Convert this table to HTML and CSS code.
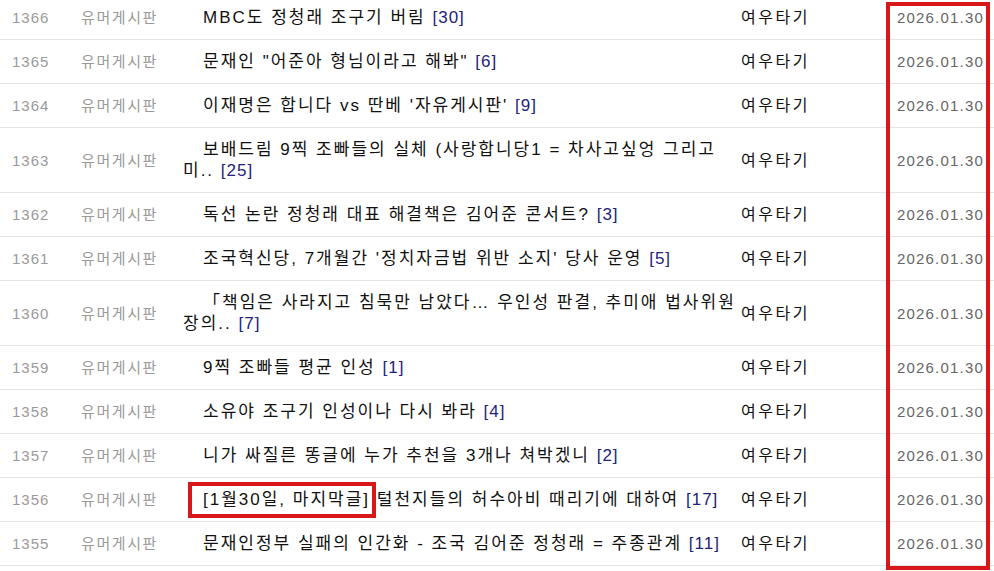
FILE: index.html
```html
<!DOCTYPE html>
<html lang="ko">
<head>
<meta charset="utf-8">
<title>유머게시판</title>
<link rel="stylesheet" href="styles.css">
</head>
<body>
<div class="board">
  <div class="list">
    <div class="row"><div class="num">1366</div><div class="cat">유머게시판</div><div class="title"><span class="t">MBC도 정청래 조구기 버림</span> <span class="cmt">[30]</span></div><div class="author">여우타기</div><div class="date">2026.01.30</div></div>
    <div class="row"><div class="num">1365</div><div class="cat">유머게시판</div><div class="title"><span class="t">문재인 "어준아 형님이라고 해봐"</span> <span class="cmt">[6]</span></div><div class="author">여우타기</div><div class="date">2026.01.30</div></div>
    <div class="row"><div class="num">1364</div><div class="cat">유머게시판</div><div class="title"><span class="t">이재명은 합니다 vs 딴베 '자유게시판'</span> <span class="cmt">[9]</span></div><div class="author">여우타기</div><div class="date">2026.01.30</div></div>
    <div class="row"><div class="num">1363</div><div class="cat">유머게시판</div><div class="title"><span class="t">보배드림 9찍 조빠들의 실체 (사랑합니당1 = 차사고싶엉 그리고</span> <span class="t">미..</span> <span class="cmt">[25]</span></div><div class="author">여우타기</div><div class="date">2026.01.30</div></div>
    <div class="row"><div class="num">1362</div><div class="cat">유머게시판</div><div class="title"><span class="t">독선 논란 정청래 대표 해결책은 김어준 콘서트?</span> <span class="cmt">[3]</span></div><div class="author">여우타기</div><div class="date">2026.01.30</div></div>
    <div class="row"><div class="num">1361</div><div class="cat">유머게시판</div><div class="title"><span class="t">조국혁신당, 7개월간 '정치자금법 위반 소지' 당사 운영</span> <span class="cmt">[5]</span></div><div class="author">여우타기</div><div class="date">2026.01.30</div></div>
    <div class="row"><div class="num">1360</div><div class="cat">유머게시판</div><div class="title"><span class="t">「책임은 사라지고 침묵만 남았다… 우인성 판결, 추미애 법사위원</span><span class="t">장의..</span> <span class="cmt">[7]</span></div><div class="author">여우타기</div><div class="date">2026.01.30</div></div>
    <div class="row"><div class="num">1359</div><div class="cat">유머게시판</div><div class="title"><span class="t">9찍 조빠들 평균 인성</span> <span class="cmt">[1]</span></div><div class="author">여우타기</div><div class="date">2026.01.30</div></div>
    <div class="row"><div class="num">1358</div><div class="cat">유머게시판</div><div class="title"><span class="t">소유야 조구기 인성이나 다시 봐라</span> <span class="cmt">[4]</span></div><div class="author">여우타기</div><div class="date">2026.01.30</div></div>
    <div class="row"><div class="num">1357</div><div class="cat">유머게시판</div><div class="title"><span class="t">니가 싸질른 똥글에 누가 추천을 3개나 쳐박겠니</span> <span class="cmt">[2]</span></div><div class="author">여우타기</div><div class="date">2026.01.30</div></div>
    <div class="row"><div class="num">1356</div><div class="cat">유머게시판</div><div class="title"><span class="t"><span class="mark">[1월30일, 마지막글]</span> 털천지들의 허수아비 때리기에 대하여</span> <span class="cmt">[17]</span></div><div class="author">여우타기</div><div class="date">2026.01.30</div></div>
    <div class="row"><div class="num">1355</div><div class="cat">유머게시판</div><div class="title"><span class="t">문재인정부 실패의 인간화 - 조국 김어준 정청래 = 주종관계</span> <span class="cmt">[11]</span></div><div class="author">여우타기</div><div class="date">2026.01.30</div></div>
  </div>
  <div class="date-mark"></div>
</div>
</body>
</html>
```

FILE: styles.css
```css
html, body {
  margin: 0;
  padding: 0;
  background: #fff;
}
body {
  font-family: "Liberation Sans", "Noto Sans CJK KR", sans-serif;
  font-size: 15px;
  color: #111;
  overflow: hidden;
}
.board {
  position: relative;
  width: 994px;
  height: 571px;
  overflow: hidden;
}
.list {
  margin-top: -4px;
}
.row {
  display: grid;
  grid-template-columns: 81px 102px 557px 150px 1fr;
  align-items: center;
  padding: 11px 0;
  border-bottom: 1px solid #e4e4e4;
  line-height: 21px;
}
.num {
  padding-left: 12px;
  color: #9a9a9a;
  letter-spacing: 1px;
}
.cat {
  color: #9a9a9a;
  letter-spacing: 1.6px;
}
.title {
  font-size: 17px;
  letter-spacing: 2px;
  text-indent: 20px;
  color: #111;
}
.cmt {
  color: #23237a;
  letter-spacing: 1px;
}
.author {
  padding-left: 1px;
  font-size: 16px;
  letter-spacing: 2.5px;
  color: #111;
}
.date {
  text-align: right;
  padding-right: 10px;
  color: #666;
  letter-spacing: 1.2px;
}
.mark {
  position: relative;
  display: inline-block;
  text-indent: 0;
}
.mark::before {
  content: "";
  position: absolute;
  left: -15px;
  right: -6px;
  top: -7px;
  bottom: -8px;
  border: 4px solid #d81818;
}
.date-mark {
  position: absolute;
  left: 886px;
  top: 2px;
  width: 104px;
  height: 568px;
  box-sizing: border-box;
  border: 4px solid #d81818;
}
```
